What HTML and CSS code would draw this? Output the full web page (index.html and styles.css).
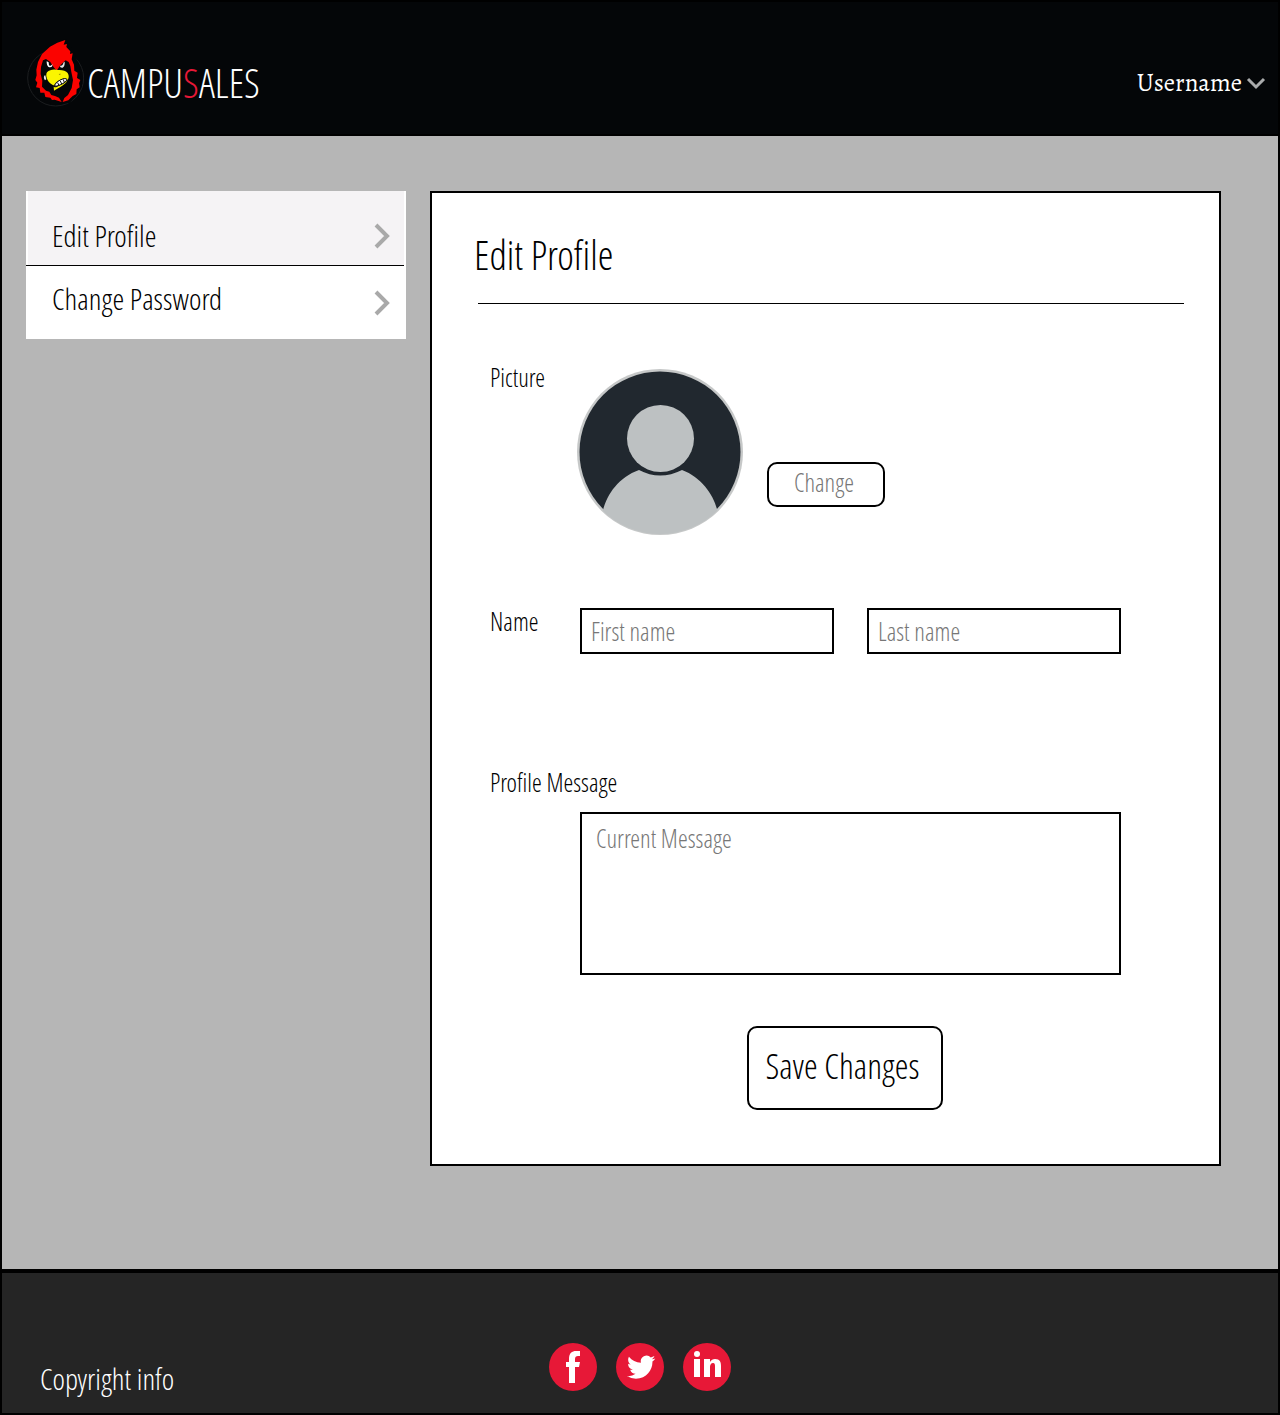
FILE: index.html
```html
<!DOCTYPE html>
<html lang="en">
<head>
  <meta charset="utf-8">
  <meta name="viewport" content="width=device-width, initial-scale=1">
  <title>CampuSales - Edit Profile</title>
  <link rel="stylesheet" href="styles.css">
</head>
<body>
  <header class="site-header">
    <a class="logo" href="#">
      <svg class="logo-mark" viewBox="18 24 174 210" aria-hidden="true">
        <circle cx="107" cy="144" r="84" fill="none" stroke="#1b1d1f" stroke-width="3"/>
        <path fill="#040608" d="M137 27 90 48 56 80 44 120 42 190 100 224 150 218 186 170 178 110 160 60z"/>
        <path fill="#fb0300" d="M136 30 131 44 141 42 139 51 151 64 150 72 158 70 155 88 162 104 163 122 173 128 171 144 181 150 177 160 179 172 170 178 169 192 158 198 145 211 128 216 133 204 144 195 155 174 159 150 154 126 151 108 146 96 137 91 121 106 110 122 101 112 91 96 78 87 69 91 63 111 62 132 67 152 66 170 78 182 88 185 94 195 105 198 117 203 125 216 104 209 96 210 91 203 76 201 73 188 61 188 59 174 48 172 52 158 46 150 50 136 49 119 54 96 66 72 90 50 112 38z"/>
        <path fill="#fff" d="M80 94c0 13 4 18 10 18 7 0 8-6 7-10-2 5-8 8-10 3-1-5 0-7-2-9z"/>
        <path fill="#e4e4e4" d="M134 95c1 11-3 18-8 18-4 0-6-3-6-6 6 2 10-4 10-9z"/>
        <path fill="#e4e4e4" d="M76 136c-5-1-6 10-1 15l4-3z"/>
        <path fill="#fbf500" d="M81 127c8-9 22-10 33-7 12-1 24 2 29 9 5 8 4 17-1 22-3-8-13-7-22-1-9 5-17 9-16 16-9-1-19-10-23-20-3-7-3-14 0-19z"/>
        <path fill="#fbf500" d="M101 170c3 1 5 3 9 1 12-6 25-10 32-20 0 8-25 24-40 31z"/>
        <path fill="#fff" stroke="#111" stroke-width="3" d="M104 165c6-12 30-24 37-17-3 10-22 18-34 21zM113 158l4 9M121 153l4 9M130 149l3 8"/>
        <path d="M116 132l6-1-2 4z" fill="#7a7600"/>
      </svg>
      <span class="logo-text">CAMPU<span class="logo-accent">S</span>ALES</span>
    </a>
    <button class="user-menu" type="button">Username
      <svg class="user-chevron" viewBox="0 0 20 14" aria-hidden="true"><path d="M2 3l8 8 8-8" fill="none" stroke="#a9abac" stroke-width="3"/></svg>
    </button>
  </header>

  <main class="content">
    <nav class="side-nav" aria-label="Account">
      <a class="side-link side-link-active" href="#" aria-current="page">
        <span>Edit Profile</span>
        <svg class="side-chevron" viewBox="0 0 16 26" aria-hidden="true"><path d="M2 2l11 11L2 24" fill="none" stroke="#a9a9a9" stroke-width="4"/></svg>
      </a>
      <a class="side-link" href="#">
        <span class="side-label">Change Password</span>
        <svg class="side-chevron" viewBox="0 0 16 26" aria-hidden="true"><path d="M2 2l11 11L2 24" fill="none" stroke="#a9a9a9" stroke-width="4"/></svg>
      </a>
    </nav>

    <section class="card">
      <h1 class="card-title">Edit Profile</h1>
      <form class="profile-form">
        <div class="row">
          <span class="label">Picture</span>
          <div class="picture">
            <svg class="avatar" viewBox="0 0 166 166" role="img" aria-label="Profile picture">
              <defs><clipPath id="disc"><circle cx="83" cy="83" r="82"/></clipPath></defs>
              <circle cx="83" cy="83" r="83" fill="#c6c8c8"/>
              <circle cx="83" cy="83" r="80.5" fill="#21282f"/>
              <g clip-path="url(#disc)">
                <path fill="#bdc1c2" d="M26 141C30 125 42 108 62 101Q83 112 105 101C124 108 136 125 140 140L140 166H26z"/>
              </g>
              <circle cx="83.5" cy="69.5" r="33.5" fill="#bdc1c2"/>
            </svg>
            <button class="button button-change" type="button">Change</button>
          </div>
        </div>
        <div class="row row-name">
          <label class="label" for="first-name">Name</label>
          <div class="names">
            <input class="field" id="first-name" type="text" placeholder="First name">
            <input class="field" id="last-name" type="text" placeholder="Last name" aria-label="Last name">
          </div>
        </div>
        <div class="message">
          <label class="label" for="message">Profile Message</label>
          <textarea class="field field-message" id="message" placeholder="Current Message"></textarea>
        </div>
        <div class="actions">
          <button class="button button-save" type="submit">Save Changes</button>
        </div>
      </form>
    </section>
  </main>

  <footer class="site-footer">
    <p class="copyright">Copyright info</p>
    <div class="social">
      <a href="#" aria-label="Facebook">
        <svg class="social-icon" viewBox="0 0 48 48"><circle cx="24" cy="24" r="24" fill="#e71837"/><path fill="#fff" d="M20 40V24h-3v-5h3v-3c0-6 3-8 7-8h4v5h-2c-2 0-3 1-3 3v3h5l-1 5h-4v16z"/></svg>
      </a>
      <a href="#" aria-label="Twitter">
        <svg class="social-icon" viewBox="0 0 48 48"><circle cx="24" cy="24" r="24" fill="#e71837"/><path fill="#fff" transform="translate(11 10) scale(1.18)" d="M23.953 4.57a10 10 0 01-2.825.775 4.958 4.958 0 002.163-2.723c-.951.555-2.005.959-3.127 1.184a4.92 4.92 0 00-8.384 4.482C7.69 8.095 4.067 6.13 1.64 3.162a4.822 4.822 0 00-.666 2.475c0 1.71.87 3.213 2.188 4.096a4.904 4.904 0 01-2.228-.616v.06a4.923 4.923 0 003.946 4.827 4.996 4.996 0 01-2.212.085 4.936 4.936 0 004.604 3.417 9.867 9.867 0 01-6.102 2.105c-.39 0-.779-.023-1.17-.067a13.995 13.995 0 007.557 2.209c9.053 0 13.998-7.496 13.998-13.985 0-.21 0-.42-.015-.63A9.935 9.935 0 0024 4.59z"/></svg>
      </a>
      <a href="#" aria-label="LinkedIn">
        <svg class="social-icon" viewBox="0 0 48 48"><circle cx="24" cy="24" r="24" fill="#e71837"/><circle cx="14" cy="11" r="3" fill="#fff"/><path fill="#fff" d="M11 16h6v18h-6zM21 16h6v3c1-2 3-3 5-3 5 0 6 3 6 7v11h-6V24c0-2 0-4-2-4s-3 2-3 4v10h-6z"/></svg>
      </a>
    </div>
  </footer>
</body>
</html>
```
FILE: styles.css
```css
* {
  box-sizing: border-box;
}

body {
  margin: 0;
  border: 2px solid #000;
  background: #b6b6b6;
  color: #000;
  font-family: "Open Sans Condensed Light", "Open Sans Condensed", "Open Sans", sans-serif;
  font-weight: 300;
  font-size: 30px;
  line-height: 40px;
}

a {
  color: inherit;
  text-decoration: none;
}

svg {
  display: block;
}

button,
input,
textarea {
  margin: 0;
  font: inherit;
}

/* Header */
.site-header {
  display: flex;
  justify-content: space-between;
  align-items: flex-end;
  padding: 36px 12px 26px 24px;
  border-bottom: 2px solid #000;
  background: #040608;
  color: #fff;
}

.logo {
  display: flex;
  align-items: flex-end;
  gap: 3px;
}

.logo-mark {
  width: 58px;
  height: 70px;
}

.logo-text {
  font-size: 40px;
  line-height: 50px;
}

.logo-accent {
  color: #e71837;
}

.user-menu {
  display: flex;
  align-items: center;
  gap: 4px;
  padding: 0;
  border: 0;
  background: none;
  color: #fff;
  font-family: Alegreya, "Liberation Serif", serif;
  font-size: 25px;
  font-weight: 400;
  line-height: 50px;
}

.user-chevron {
  width: 20px;
  height: 14px;
}

/* Page body */
.content {
  display: grid;
  grid-template-columns: 380px minmax(0, 1fr);
  align-items: start;
  gap: 24px;
  padding: 55px 57px 103px 24px;
}

.side-nav {
  background: #fff;
}

.side-link {
  display: flex;
  justify-content: space-between;
  align-items: center;
  min-height: 73px;
  padding: 0 16px 0 26px;
}

.side-link-active {
  margin-right: 2px;
  padding: 25px 14px 9px 26px;
  border-bottom: 1px solid #000;
  background: #f5f3f5;
  box-shadow: inset 2px 0 #fff;
}

.side-label {
  padding-bottom: 8px;
}

.side-chevron {
  width: 16px;
  height: 26px;
}

/* Profile card */
.card {
  padding: 35px 35px 54px 42px;
  border: 2px solid #000;
  background: #fff;
}

.card-title {
  margin: 0;
  font-size: 40px;
  font-weight: 300;
  line-height: 54px;
}

.profile-form {
  margin: 21px 0 0 4px;
  padding: 56px 63px 0 12px;
  border-top: 1px solid #000;
}

.row {
  display: grid;
  grid-template-columns: 90px minmax(0, 1fr);
}

.row-name {
  margin-top: 69px;
}

.label {
  font-size: 25px;
  line-height: 34px;
}

.picture {
  display: flex;
  align-items: flex-end;
  gap: 24px;
  margin: 9px 0 0 -3px;
}

.avatar {
  width: 166px;
  height: 166px;
}

.button {
  border: 2px solid #000;
  border-radius: 10px;
  background: #fff;
  color: #000;
}

.button-change {
  width: 118px;
  height: 45px;
  margin-bottom: 28px;
  padding: 0 4px 6px 0;
  color: #777;
  font-size: 25px;
  line-height: 34px;
}

.names {
  display: grid;
  grid-template-columns: 1fr 1fr;
  gap: 33px;
  padding-top: 4px;
}

.field {
  width: 100%;
  height: 46px;
  padding: 0 9px;
  border: 2px solid #000;
  border-radius: 0;
  background: #fff;
  color: #000;
  font-size: 25px;
  line-height: 34px;
}

.field::placeholder {
  color: #777;
  opacity: 1;
}

.message {
  display: flex;
  flex-direction: column;
  gap: 13px;
  margin-top: 111px;
}

.field-message {
  display: block;
  width: auto;
  height: 163px;
  margin-left: 90px;
  padding: 7px 14px;
  resize: none;
}

.actions {
  display: flex;
  justify-content: center;
  margin-top: 51px;
  padding-left: 78px;
}

.button-save {
  width: 196px;
  height: 84px;
  padding: 0 4px 5px 0;
  font-size: 35px;
  line-height: 48px;
}

/* Footer */
.site-footer {
  display: grid;
  grid-template-columns: 1fr auto 1fr;
  align-items: start;
  padding: 70px 38px 14px;
  border-top: 4px solid #000;
  background: #252525;
  color: #fff;
}

.copyright {
  margin: 16px 0 0;
}

.social {
  display: flex;
  gap: 19px;
}

.social-icon {
  width: 48px;
  height: 48px;
}
```
